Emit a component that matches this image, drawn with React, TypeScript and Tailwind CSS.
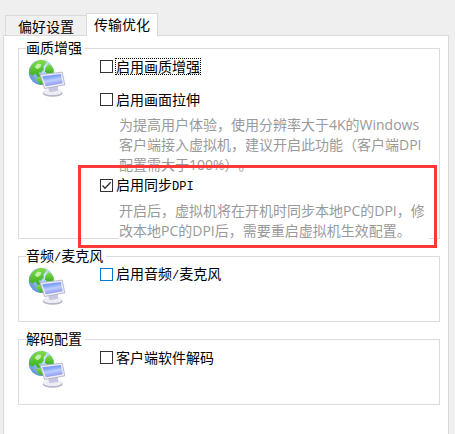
import * as React from "react"

interface OptionProps {
  id: string
  label: React.ReactNode
  checked?: boolean
  focused?: boolean
  hot?: boolean
}

const Option: React.FC<OptionProps> = ({ id, label, checked, focused, hot }) => {
  return (
    <div className="flex h-[17px] items-center gap-0.5">
      <span className="grid">
        <input
          id={id}
          type="checkbox"
          defaultChecked={checked}
          className={`peer col-start-1 row-start-1 h-[13px] w-[13px] appearance-none border bg-white outline-none ${
            hot ? "border-[#0078d7]" : "border-[#333333]"
          }`}
        />
        <svg
          viewBox="0 0 13 13"
          className="pointer-events-none invisible col-start-1 row-start-1 h-[13px] w-[13px] peer-checked:visible"
        >
          <path d="M2.5 6.5L5 9.2L10.7 3.2" fill="none" stroke="#333" strokeWidth="1.3" />
        </svg>
      </span>
      <label
        htmlFor={id}
        className={`border border-dotted leading-[15px] ${
          focused ? "border-black" : "border-transparent"
        }`}
      >
        {label}
      </label>
    </div>
  )
}

// SimSun style half-width characters
const Half: React.FC<{ children: React.ReactNode }> = ({ children }) => (
  <span className="font-['Liberation_Mono',monospace] text-[12px]">{children}</span>
)

const Hint: React.FC<{ children: React.ReactNode }> = ({ children }) => (
  <p className="mt-[7px] mr-[10px] ml-[19px] bg-white font-['Open_Sans','Noto_Sans_CJK_SC',sans-serif] leading-5 text-[#999999] [text-spacing-trim:space-all]">
    {children}
  </p>
)

const NetworkIcon: React.FC = () => (
  <svg viewBox="0 0 37 37" className="h-[38px] w-[38px] shrink-0" aria-hidden="true">
    <defs>
      <radialGradient id="globe" cx="0.65" cy="0.3" r="0.8">
        <stop offset="0" stopColor="#d4e9fa" />
        <stop offset="0.45" stopColor="#9cc8ee" />
        <stop offset="1" stopColor="#5c8cd0" />
      </radialGradient>
      <linearGradient id="land" x1="0" y1="0" x2="0" y2="1">
        <stop offset="0" stopColor="#84dc4a" />
        <stop offset="1" stopColor="#38b01e" />
      </linearGradient>
      <linearGradient id="screen" x1="0" y1="0" x2="0.3" y2="1">
        <stop offset="0" stopColor="#6a8cf4" />
        <stop offset="0.35" stopColor="#86a6fc" />
        <stop offset="0.6" stopColor="#bccdff" />
        <stop offset="1" stopColor="#8f94f2" />
      </linearGradient>
    </defs>
    <circle cx="13" cy="13" r="12.2" fill="url(#globe)" />
    <path
      d="M3 7.5C5.5 3 9 1 14 1L18 2.2L17 5L15 7L15.5 10L12.5 13.5L10.5 13L12 17L9.5 17.5L7 14L4.5 16L1.5 14.5C1 12 1.5 9.5 3 7.5Z"
      fill="url(#land)"
    />
    <path d="M17 8.5L19.5 5L22.5 5.8L24.8 10L25 13.5L18.5 14.3L16.5 12Z" fill="url(#land)" />
    <path d="M7.5 18.5L12.5 17.5L15 22L14.5 25L10.5 23.5Z" fill="url(#land)" />
    <path d="M6.5 7.5L9.5 4.5L13 5L12 8L9 10Z" fill="#c9efb0" />
    <ellipse cx="24" cy="33.2" rx="9.8" ry="3.6" fill="#b4b4ca" />
    <ellipse cx="23.8" cy="32.1" rx="9.2" ry="3" fill="#ededf5" />
    <path d="M19.5 27L29 25.5L29.5 31L21 32.4Z" fill="#c6c6de" />
    <path
      d="M11.8 15.2L33.4 12.8L35.8 25.2L16.2 28.8Z"
      fill="#ececf4"
      stroke="#adadc2"
      strokeWidth="0.8"
      strokeLinejoin="round"
    />
    <path d="M13.9 16.7L32 14.7L33.7 23.7L17.3 26.6Z" fill="url(#screen)" />
  </svg>
)

interface GroupProps {
  title: React.ReactNode
  children: React.ReactNode
}

const Group: React.FC<GroupProps> = ({ title, children }) => {
  return (
    <fieldset className="min-w-0 border border-[#dcdcdc] pl-[9px]">
      <legend className="-ml-0.5 h-[19px] pr-[3px] leading-[17px]">{title}</legend>
      <div className="flex gap-[34px]">
        <div className="pt-px pb-4">
          <NetworkIcon />
        </div>
        <div className="min-w-0 flex-1">{children}</div>
      </div>
    </fieldset>
  )
}

export default function App() {
  return (
    <main className="flex min-h-screen flex-col bg-[#efefef] pt-[13px] pr-[6px] pl-[3px] font-['Noto_Sans_CJK_SC',sans-serif] text-[14px] text-black">
      <div role="tablist" className="relative -mb-px flex items-end pl-0.5">
        <button
          role="tab"
          aria-selected="false"
          className="mb-px h-5 border border-r-0 border-b-0 border-[#d9d9d9] bg-[#f0f0f0] px-3 leading-[18px]"
        >
          偏好设置
        </button>
        <button
          role="tab"
          aria-selected="true"
          className="h-[23px] border border-b-0 border-[#d9d9d9] bg-white px-[7px] pb-0.5 leading-[18px]"
        >
          传输优化
        </button>
      </div>
      <div
        role="tabpanel"
        className="flex flex-1 flex-col gap-2 border border-b-0 border-[#d9d9d9] bg-white pt-[3px] pr-2 pl-[14px]"
      >
        <Group title="画质增强">
          <Option id="enhance" label="启用画质增强" focused />
          <div className="mt-4">
            <Option id="stretch" label="启用画面拉伸" />
            <Hint>
              为提高用户体验，使用分辨率大于4K的Windows客户端接入虚拟机，建议开启此功能（客户端DPI配置需大于100%）。
            </Hint>
          </div>
          <div className="relative mt-0.5 -mb-[3px]">
            <Option id="dpi" label={<>启用同步<Half>DPI</Half></>} checked />
            <Hint>
              开启后，虚拟机将在开机时同步本地PC的DPI，修改本地PC的DPI后，需要重启虚拟机生效配置。
            </Hint>
            {/* callout frame over the DPI option */}
            <div className="pointer-events-none absolute -top-3 right-0.5 -bottom-[7px] -left-[22px] border-3 border-[#fd3838]" />
          </div>
        </Group>
        <Group title={<>音频<Half>/</Half>麦克风</>}>
          <Option id="audio" label={<>启用音频<Half>/</Half>麦克风</>} hot />
        </Group>
        <Group title="解码配置">
          <Option id="decode" label="客户端软件解码" />
        </Group>
      </div>
    </main>
  )
}
